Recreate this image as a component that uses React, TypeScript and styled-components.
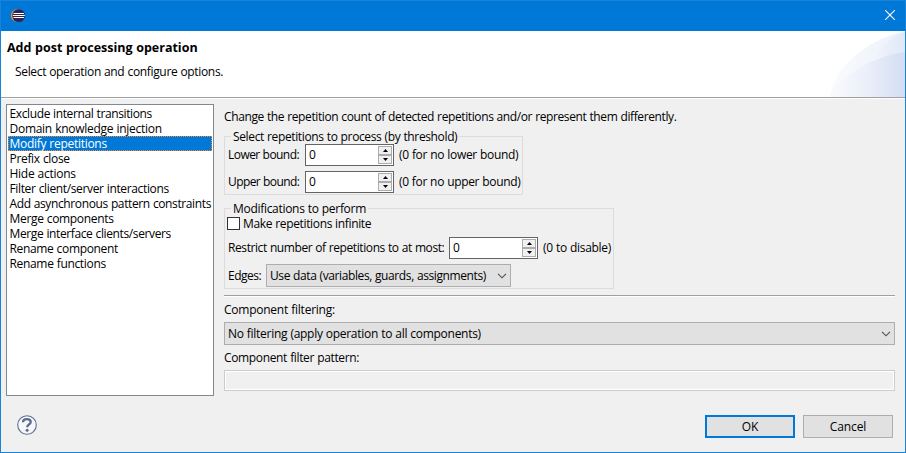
import React from "react";
import styled, { createGlobalStyle, css } from "styled-components";

const GlobalStyle = createGlobalStyle`
  * { box-sizing: border-box; }
  body { margin: 0; }
`;

const Dialog = styled.div`
  width: 906px;
  height: 453px;
  display: flex;
  flex-direction: column;
  background: #f0f0f0;
  border: 1px solid #1883d7;
  color: #000;
  font: 12px/15px "Open Sans", "Noto Sans", sans-serif;
  word-spacing: 0.35px;
  overflow: hidden;
  cursor: default;
`;

const TitleBar = styled.div`
  flex: none;
  height: 30px;
  padding: 0 10px 0 10px;
  display: flex;
  align-items: center;
  justify-content: space-between;
  background: #0078d7;
`;

const Header = styled.div`
  flex: none;
  height: 68px;
  display: flex;
  justify-content: space-between;
  background: #fff;
  border-bottom: 1px solid #fff;
  box-shadow: inset 0 -1px 0 #a0a0a0;
`;

const HeaderText = styled.div`
  padding: 9px 0 0 6px;
`;

const Heading = styled.h1`
  margin: 0;
  font-size: 12.5px;
  line-height: 16px;
  font-weight: 700;
`;

const Subtitle = styled.p`
  margin: 8px 0 0 8px;
  letter-spacing: -0.34px;
`;

const Text = styled.span<{ $track?: number }>`
  display: block;
  white-space: nowrap;
  letter-spacing: ${(p) => p.$track ?? -0.32}px;
`;

const Body = styled.div`
  flex: 1;
  min-height: 0;
  padding: 5px 10px 0 5px;
  display: flex;
  gap: 10px;
`;

const List = styled.ul`
  flex: none;
  width: 208px;
  height: 292px;
  margin: 0;
  padding: 1px;
  list-style: none;
  background: #fff;
  border: 1px solid #828790;
`;

const ListItem = styled.li<{ $selected?: boolean; $track: number }>`
  height: 15px;
  padding-left: 1.5px;
  white-space: nowrap;
  letter-spacing: ${(p) => p.$track}px;
  ${(p) =>
    p.$selected &&
    css`
      background: #0078d7;
      color: #fff;
      outline: 1px dotted #ff8728;
      outline-offset: -1px;
    `}
`;

const Options = styled.div`
  flex: 1;
  min-width: 0;
  display: flex;
  flex-direction: column;
  align-items: flex-start;
  padding-top: 5px;
`;

const Group = styled.fieldset<{ $width: number; $height: number; $top: number }>`
  width: ${(p) => p.$width}px;
  height: ${(p) => p.$height}px;
  margin: ${(p) => p.$top}px 0 0;
  padding: 0 0 0 3px;
  min-width: 0;
  border: 1px solid #dcdcdc;
`;

const Legend = styled.legend<{ $track: number }>`
  height: 15px;
  margin-left: 3px;
  padding: 0 2px;
  white-space: nowrap;
  letter-spacing: ${(p) => p.$track}px;
`;

const Row = styled.div<{ $height?: number; $top?: number }>`
  height: ${(p) => p.$height ?? 22}px;
  margin-top: ${(p) => p.$top ?? 0}px;
  display: flex;
  align-items: center;
`;

const SpinRow = styled(Row)`
  & ${Text} {
    margin-bottom: 1px;
  }
`;

const Caption = styled(Text)<{ $width: number }>`
  flex: none;
  width: ${(p) => p.$width}px;
`;

const SpinBox = styled.div`
  flex: none;
  width: 89px;
  height: 22px;
  margin-right: 5px;
  padding: 1px 1px 1px 3px;
  display: flex;
  justify-content: space-between;
  align-items: center;
  background: #fff;
  border: 1px solid #646464;
`;

const SpinButtons = styled.div`
  width: 14px;
  height: 18px;
  display: grid;
  grid-template-rows: 9px 9px;
`;

const SpinButton = styled.div`
  display: flex;
  align-items: center;
  justify-content: center;
  background: #f0f0f0;
  border: 1px solid #acacac;
`;

const CheckBox = styled.div`
  flex: none;
  width: 13px;
  height: 13px;
  margin: 0 3px 0 -1px;
  background: #fff;
  border: 1px solid #333;
`;

const Combo = styled.div<{ $width: number; $top?: number }>`
  flex: none;
  width: ${(p) => p.$width}px;
  height: 23px;
  margin-top: ${(p) => p.$top ?? 0}px;
  padding: 0 3px 0 3px;
  display: flex;
  align-items: center;
  justify-content: space-between;
  background: #e1e1e1;
  border: 1px solid #adadad;
`;

const Separator = styled.div`
  width: 671px;
  height: 2px;
  margin: 6px 0 5px;
  background: #fff;
  border-top: 1px solid #a0a0a0;
`;

const PatternLabel = styled(Text)`
  margin-top: 5px;
`;

const PatternField = styled.div`
  width: 671px;
  height: 21px;
  margin-top: 5px;
  background: #f0f0f0;
  border: 1px solid #ccc;
  box-shadow: inset 0 0 0 1px #fff;
`;

const Footer = styled.div`
  flex: none;
  height: 48px;
  padding: 11px 12px 0 16px;
  display: flex;
  align-items: flex-start;
  gap: 8px;
`;

const Spacer = styled.div`
  flex: 1;
`;

const Button = styled.div<{ $primary?: boolean }>`
  width: 90px;
  height: 23px;
  display: flex;
  align-items: center;
  justify-content: center;
  background: #e1e1e1;
  border: ${(p) => (p.$primary ? "2px solid #0078d7" : "1px solid #adadad")};
`;

const Icon = styled.svg`
  display: block;
  flex: none;
`;

const CloseGlyph = styled(Icon)`
  margin-bottom: 2px;
`;

const operations: { name: string; track: number }[] = [
  { name: "Exclude internal transitions", track: -0.38 },
  { name: "Domain knowledge injection", track: -0.275 },
  { name: "Modify repetitions", track: -0.29 },
  { name: "Prefix close", track: -0.32 },
  { name: "Hide actions", track: -0.27 },
  { name: "Filter client/server interactions", track: -0.355 },
  { name: "Add asynchronous pattern constraints", track: -0.38 },
  { name: "Merge components", track: -0.32 },
  { name: "Merge interface clients/servers", track: -0.38 },
  { name: "Rename component", track: -0.34 },
  { name: "Rename functions", track: -0.33 },
];

function EclipseIcon() {
  return (
    <Icon width="16" height="16" viewBox="0 0 16 16">
      <circle cx="6.200" cy="7.600" r="6.300" fill="#f7941e" />
      <circle cx="7.600" cy="7.600" r="6.400" fill="#2c2255" />
      <path d="M2.500 5.500h10.500M1.800 7.500h12M2.500 9.500h10.500" stroke="#fff" strokeWidth="1" />
    </Icon>
  );
}

function CloseIcon() {
  return (
    <CloseGlyph width="10" height="10" viewBox="0 0 10 10">
      <path d="M0 0L10 10M10 0L0 10" stroke="#fff" strokeWidth="1.1" />
    </CloseGlyph>
  );
}

function BannerArt() {
  return (
    <Icon width="75" height="66" viewBox="0 0 75 66">
      <defs>
        <linearGradient id="outer" x1="0" x2="1">
          <stop offset="0" stopColor="#fafbfe" />
          <stop offset="1" stopColor="#ebf0fa" />
        </linearGradient>
        <linearGradient id="inner" x1="0" x2="1">
          <stop offset="0" stopColor="#f9fafd" />
          <stop offset=".5" stopColor="#ebeff9" />
          <stop offset="1" stopColor="#d3def3" />
        </linearGradient>
        <linearGradient id="corner" x1="0" x2="1">
          <stop offset="0" stopColor="#eff3fb" />
          <stop offset="1" stopColor="#e0e8f7" />
        </linearGradient>
      </defs>
      <path d="M0 66C3 40 32 10 75 0V66Z" fill="url(#outer)" />
      <path d="M75 1C62 5 52 14 46 26L75 22Z" fill="url(#corner)" />
      <path d="M0 66C3 57 7 53 14 48C31 34 51 24 75 21V66Z" fill="url(#inner)" />
    </Icon>
  );
}

function HelpIcon() {
  return (
    <Icon width="20" height="20" viewBox="0 0 20 20">
      <circle cx="10" cy="10" r="9.3" fill="#f7f7f8" stroke="#5c6f8f" strokeWidth="1.1" />
      <path
        d="M6 7.200C6 5 7.600 4.100 9.800 4.100c2.400 0 3.900 1 3.900 2.800 0 2.400-3.500 2.500-3.500 5.300"
        fill="none"
        stroke="#5a6c8e"
        strokeWidth="2.300"
      />
      <circle cx="10.100" cy="15.300" r="1.500" fill="#5a6c8e" />
    </Icon>
  );
}

function Chevron() {
  return (
    <Icon width="10" height="6" viewBox="0 0 10 6">
      <path d="M1 .8l4 4 4-4" fill="none" stroke="#505050" strokeWidth="1.1" />
    </Icon>
  );
}

function Spinner({ value }: { value: string }) {
  return (
    <SpinBox>
      <Text>{value}</Text>
      <SpinButtons>
        <SpinButton>
          <Icon width="5" height="3" viewBox="0 0 5 3">
            <path d="M0 3L2.500 0L5 3Z" fill="#000" />
          </Icon>
        </SpinButton>
        <SpinButton>
          <Icon width="5" height="3" viewBox="0 0 5 3">
            <path d="M0 0L2.500 3L5 0Z" fill="#000" />
          </Icon>
        </SpinButton>
      </SpinButtons>
    </SpinBox>
  );
}

export default function App() {
  return (
    <>
      <GlobalStyle />
      <Dialog>
        <TitleBar>
          <EclipseIcon />
          <CloseIcon />
        </TitleBar>
        <Header>
          <HeaderText>
            <Heading>Add post processing operation</Heading>
            <Subtitle>Select operation and configure options.</Subtitle>
          </HeaderText>
          <BannerArt />
        </Header>
        <Body>
          <List>
            {operations.map((op) => (
              <ListItem key={op.name} $track={op.track} $selected={op.name === "Modify repetitions"}>
                {op.name}
              </ListItem>
            ))}
          </List>
          <Options>
            <Text $track={-0.39}>
              Change the repetition count of detected repetitions and/or represent them differently.
            </Text>
            <Group $width={299} $height={66} $top={5}>
              <Legend $track={-0.365}>Select repetitions to process (by threshold)</Legend>
              <SpinRow>
                <Caption $width={77} $track={-0.55}>Lower bound:</Caption>
                <Spinner value="0" />
                <Text $track={-0.32}>(0 for no lower bound)</Text>
              </SpinRow>
              <SpinRow $top={5}>
                <Caption $width={77} $track={-0.58}>Upper bound:</Caption>
                <Spinner value="0" />
                <Text $track={-0.34}>(0 for no upper bound)</Text>
              </SpinRow>
            </Group>
            <Group $width={390} $height={88} $top={6}>
              <Legend $track={-0.3}>Modifications to perform</Legend>
              <Row $height={15}>
                <CheckBox />
                <Text $track={-0.35}>Make repetitions infinite</Text>
              </Row>
              <SpinRow $top={6}>
                <Caption $width={221} $track={-0.41}>
                  Restrict number of repetitions to at most:
                </Caption>
                <Spinner value="0" />
                <Text $track={-0.31}>(0 to disable)</Text>
              </SpinRow>
              <Row $height={23} $top={5}>
                <Caption $width={38} $track={-0.5}>Edges:</Caption>
                <Combo $width={245}>
                  <Text $track={-0.395}>Use data (variables, guards, assignments)</Text>
                  <Chevron />
                </Combo>
              </Row>
            </Group>
            <Separator />
            <Text $track={-0.24}>Component filtering:</Text>
            <Combo $width={671} $top={5}>
              <Text $track={-0.285}>No filtering (apply operation to all components)</Text>
              <Chevron />
            </Combo>
            <PatternLabel $track={-0.35}>Component filter pattern:</PatternLabel>
            <PatternField />
          </Options>
        </Body>
        <Footer>
          <HelpIcon />
          <Spacer />
          <Button $primary>
            <Text $track={-0.2}>OK</Text>
          </Button>
          <Button>
            <Text $track={-0.12}>Cancel</Text>
          </Button>
        </Footer>
      </Dialog>
    </>
  );
}
